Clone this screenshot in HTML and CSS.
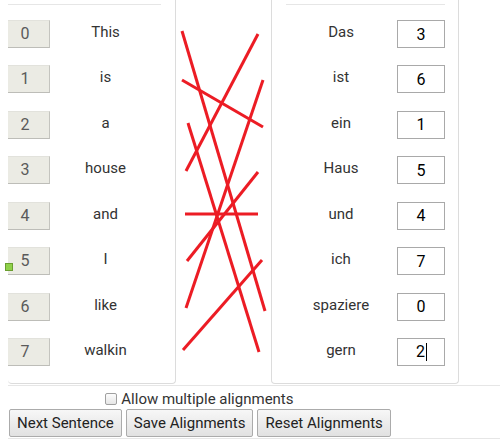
FILE: index.html
```html
<!DOCTYPE html>
<html>
<head>
<meta charset="utf-8">
<link rel="stylesheet" href="styles.css">
</head>
<body>
<div class="page">
  <div class="board">
    <div class="panel panel-left">
      <div class="rule"></div>
      <div class="row"><span class="idx">0</span><span class="word">This</span></div>
      <div class="row"><span class="idx">1</span><span class="word">is</span></div>
      <div class="row"><span class="idx">2</span><span class="word">a</span></div>
      <div class="row"><span class="idx">3</span><span class="word">house</span></div>
      <div class="row"><span class="idx">4</span><span class="word">and</span></div>
      <div class="row"><span class="idx">5</span><span class="word">I</span></div>
      <div class="row"><span class="idx">6</span><span class="word">like</span></div>
      <div class="row"><span class="idx">7</span><span class="word">walkin</span></div>
    </div>
    <div class="mid">
      <svg class="links" width="95" height="393" viewBox="176 -10 95 393">
        <g stroke="#ec1c24" stroke-width="3" stroke-linecap="butt">
          <line x1="186" y1="171" x2="258" y2="34"/>
          <line x1="186" y1="308" x2="263" y2="80"/>
          <line x1="182" y1="80" x2="263" y2="127"/>
          <line x1="187" y1="261" x2="258" y2="172"/>
          <line x1="185" y1="214" x2="258" y2="214"/>
          <line x1="183" y1="350" x2="262" y2="260"/>
          <line x1="182" y1="31" x2="265" y2="311"/>
          <line x1="188" y1="123" x2="259" y2="352"/>
        </g>
      </svg>
    </div>
    <div class="panel panel-right">
      <div class="rule"></div>
      <div class="row"><span class="word">Das</span><input class="val" type="text" value="3"></div>
      <div class="row"><span class="word">ist</span><input class="val" type="text" value="6"></div>
      <div class="row"><span class="word">ein</span><input class="val" type="text" value="1"></div>
      <div class="row"><span class="word">Haus</span><input class="val" type="text" value="5"></div>
      <div class="row"><span class="word">und</span><input class="val" type="text" value="4"></div>
      <div class="row"><span class="word">ich</span><input class="val" type="text" value="7"></div>
      <div class="row"><span class="word">spaziere</span><input class="val" type="text" value="0"></div>
      <div class="row"><span class="word">gern</span><span class="val val-focus">2<span class="caret"></span></span></div>
    </div>
  </div>
  <div class="controls">
    <div class="controls-inner">
      <label class="opt"><span class="check"></span>Allow multiple alignments</label>
      <div class="buttons">
        <button class="btn">Next Sentence</button>
        <button class="btn">Save Alignments</button>
        <button class="btn">Reset Alignments</button>
      </div>
    </div>
  </div>
</div>
<span class="endpoint"></span>
</body>
</html>
```
FILE: styles.css
```css
html, body {
  margin: 0;
  padding: 0;
  overflow: hidden;
  background: #fff;
}
body {
  font-family: Roboto, "Liberation Sans", Arial, sans-serif;
  font-size: 15px;
  color: #333;
  width: 500px;
  height: 446px;
  position: relative;
}
.page {
  padding-left: 8px;
  width: 492px;
}
.board {
  display: flex;
  align-items: stretch;
  margin-top: -10px;
  border-bottom: 1px solid #e6e6e6;
  padding-bottom: 1px;
}
.panel {
  border: 1px solid #dcdcdc;
  border-top: none;
  border-radius: 0 0 4px 4px;
  overflow: hidden;
}
.panel-left {
  border-left: none;
  width: 153px;
  padding: 14px 14px 0 0;
}
.panel-right {
  width: 159px;
  padding: 14px 13px 0 14px;
}
.rule {
  height: 1px;
  background: #e6e6e6;
  margin-bottom: 15px;
}
.row {
  display: flex;
  align-items: flex-start;
  height: 45.43px;
}
.idx {
  box-sizing: border-box;
  width: 50px;
  height: 28px;
  margin-left: -8px;
  background: #ebebe4;
  border: 1px solid;
  border-color: #e2e2dc #c4c4bf #bdbdb8 #e2e2dc;
  color: #5a5a5a;
  font-size: 16px;
  line-height: 26px;
  text-align: center;
  flex: none;
}
.word {
  flex: 1;
  text-align: center;
  line-height: 18px;
  margin-top: 3px;
  color: #333;
}
.panel-right .word {
  margin-right: 1px;
}
.val {
  box-sizing: border-box;
  width: 48px;
  height: 28px;
  margin: 0;
  padding: 0;
  border: 1px solid #a9a9a9;
  background: #fff;
  font-family: Roboto, "Liberation Sans", Arial, sans-serif;
  font-size: 16px;
  color: #000;
  text-align: center;
  line-height: 26px;
  outline: none;
  flex: none;
}
.val-focus {
  display: block;
  padding-left: 1px;
}
.caret {
  display: inline-block;
  width: 1px;
  height: 18px;
  background: #000;
  vertical-align: -4px;
  margin-left: 1px;
}
.mid {
  width: 95px;
  flex: none;
}
.links {
  display: block;
}
.controls {
  border-bottom: 1px solid #e6e6e6;
  padding-bottom: 1px;
}
.controls-inner {
  display: inline-block;
  text-align: center;
}
.opt {
  display: inline-flex;
  align-items: center;
  height: 20px;
  margin-top: 3px;
  color: #333;
  font-size: 15px;
}
.check {
  box-sizing: border-box;
  width: 12px;
  height: 12px;
  border: 1px solid #a0a0a0;
  border-radius: 2px;
  background: linear-gradient(#fcfcfc, #e6e6e6);
  margin-right: 4px;
}
.buttons {
  display: flex;
  gap: 4px;
  padding-left: 1px;
}
.btn {
  height: 28px;
  padding: 0 7px;
  margin: 0;
  font-family: Roboto, "Liberation Sans", Arial, sans-serif;
  font-size: 15px;
  color: #222;
  background: linear-gradient(#f7f7f7, #e1e1e1);
  border: 1px solid #ababab;
  border-radius: 2px;
}
.endpoint {
  position: absolute;
  left: 5px;
  top: 263px;
  width: 6px;
  height: 6px;
  background: #8fd14a;
  border: 1px solid #6a9e30;
  box-sizing: content-box;
}
```
